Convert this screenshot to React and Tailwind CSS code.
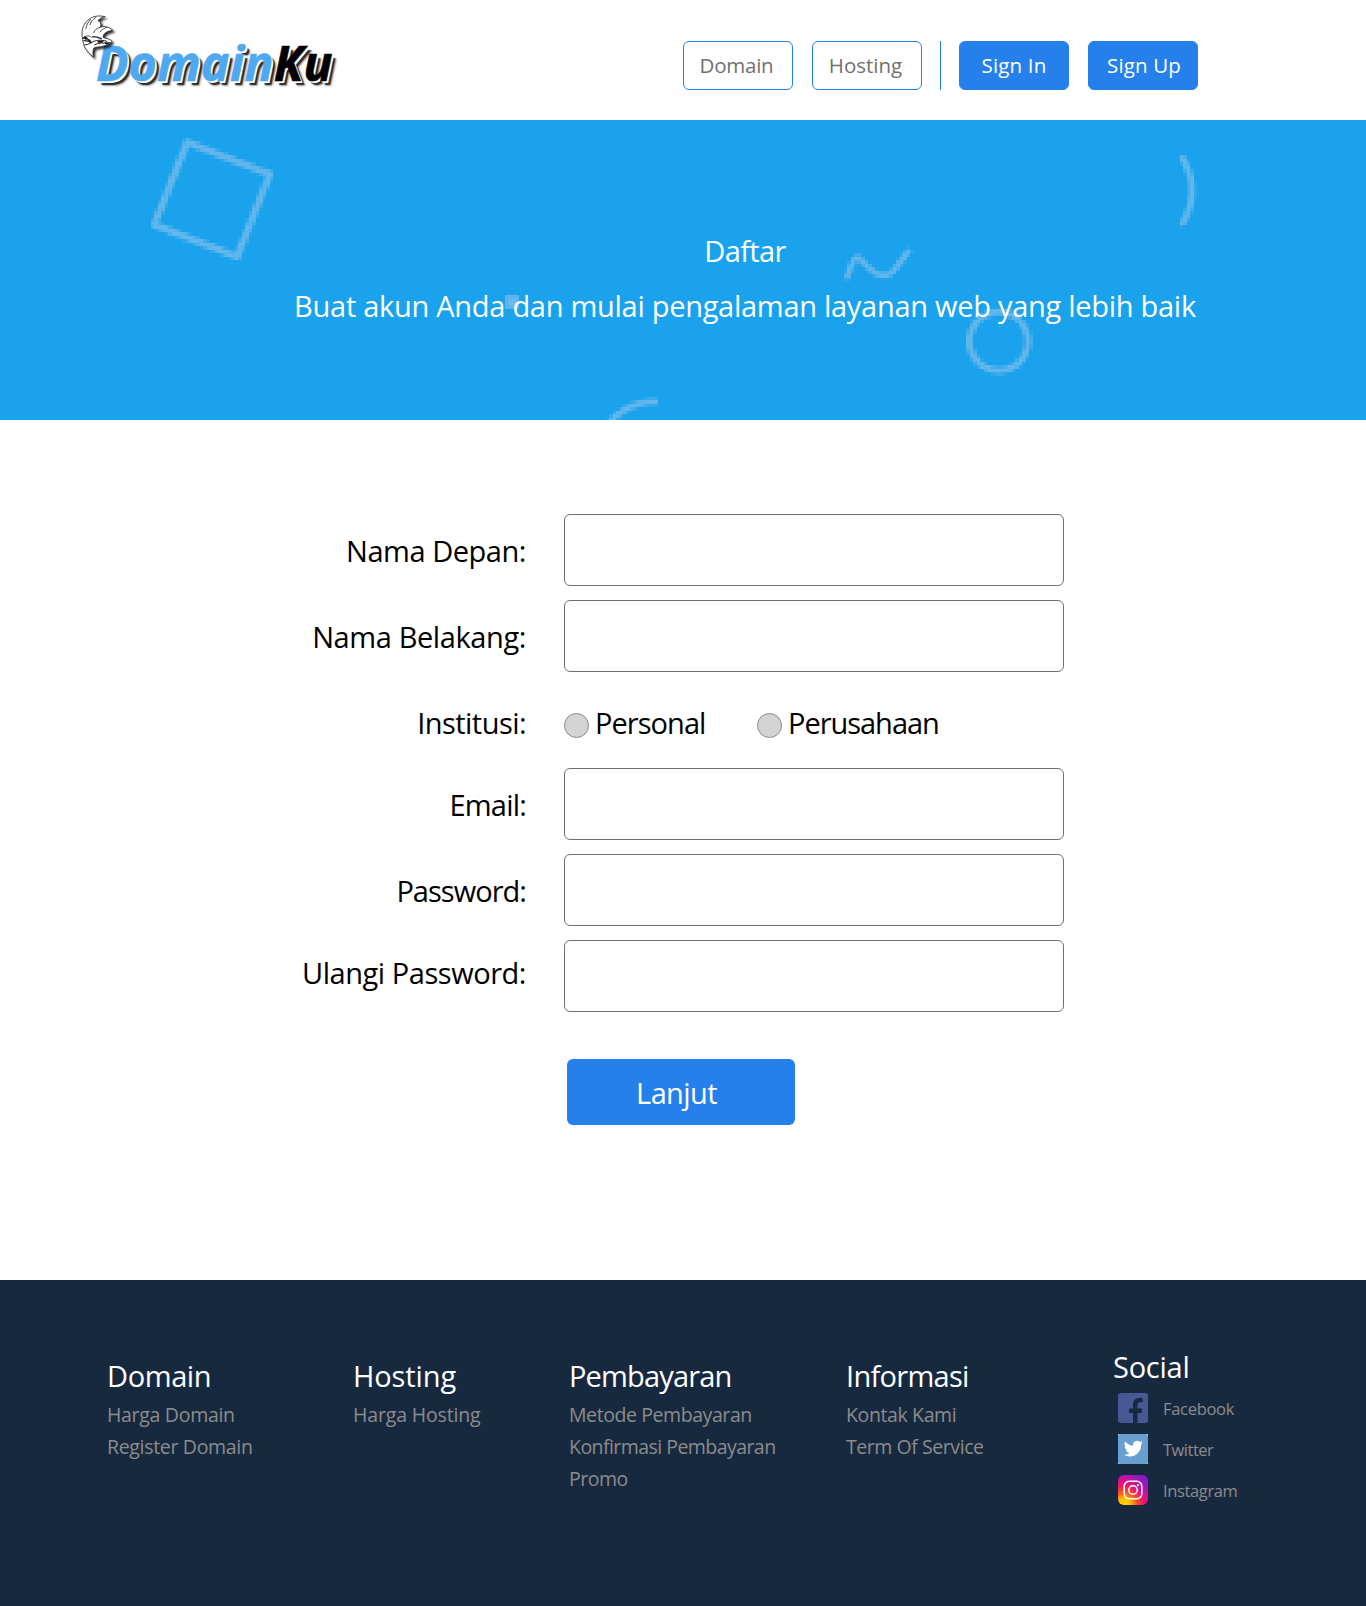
const CELL = 3.5;

// Centre lines of the hero ornaments, in hero pixels.
const arc = (cx, cy, r, from, to, steps = 28) =>
  Array.from({ length: steps + 1 }, (_, i) => {
    const a = ((from + ((to - from) * i) / steps) * Math.PI) / 180;
    return [cx + r * Math.cos(a), cy + r * Math.sin(a)];
  });

const ORNAMENTS = [
  { half: 3.5, points: [[187, 22], [269.5, 54], [236.8, 136.5], [154, 104.5], [187, 22]] },
  { half: 3.3, points: arc(998.5, 221, 29.3, 0, 360, 40) },
  { half: 3.2, points: arc(1130.5, 70.5, 61, -32, 32) },
  { half: 3.2, points: arc(654, 339.5, 58, 222, 271) },
  {
    half: 3,
    points: [
      [847, 156], [850.5, 147], [854, 139], [857.5, 137], [862, 141], [867.5, 146.5],
      [874, 152], [881, 155], [887.5, 154.5], [893.5, 150.5], [901, 140.5], [908, 131.5],
    ],
  },
];

const distance = (px, py, [ax, ay], [bx, by]) => {
  const dx = bx - ax;
  const dy = by - ay;
  const t = Math.max(0, Math.min(1, ((px - ax) * dx + (py - ay) * dy) / (dx * dx + dy * dy)));
  return Math.hypot(px - ax - t * dx, py - ay - t * dy);
};

const rasterise = ({ points, half }) => {
  const xs = points.map((p) => p[0]);
  const ys = points.map((p) => p[1]);
  const cells = [];
  const x0 = Math.floor((Math.min(...xs) - 7) / CELL);
  const x1 = Math.ceil((Math.max(...xs) + 7) / CELL);
  const y0 = Math.floor((Math.min(...ys) - 7) / CELL);
  const y1 = Math.ceil((Math.max(...ys) + 7) / CELL);
  for (let j = y0; j <= y1; j++) {
    for (let i = x0; i <= x1; i++) {
      const cx = (i + 0.5) * CELL;
      const cy = (j + 0.5) * CELL;
      let d = Infinity;
      for (let k = 1; k < points.length; k++) {
        d = Math.min(d, distance(cx, cy, points[k - 1], points[k]));
      }
      const cover = Math.max(0, Math.min(1, (half - d) / CELL + 0.5));
      if (cover > 0.05) cells.push([i * CELL, j * CELL, cover]);
    }
  }
  return cells;
};

const CELLS = ORNAMENTS.flatMap(rasterise);

function HeroOrnaments() {
  return (
    <svg className="absolute inset-0 h-full w-full" viewBox="0 0 1366 300" shapeRendering="crispEdges" aria-hidden="true">
      {CELLS.map(([x, y, cover], i) => (
        <rect key={i} x={x} y={y} width={CELL} height={CELL} fill="#e6dceb" fillOpacity={cover * 0.36} />
      ))}
      <rect x="505" y="175" width="14" height="14" fill="#e6dceb" fillOpacity="0.33" />
      <rect x="508.5" y="178.5" width="7" height="7" fill="#e6dceb" fillOpacity="0.12" />
    </svg>
  );
}

function Griffin() {
  return (
    <svg
      className="absolute -top-[21px] -left-[20px] h-[60px] w-[60px] drop-shadow-[2px_2px_1px_rgba(0,0,0,0.8)]"
      viewBox="0 0 180 180"
      fill="none"
      stroke="#222"
      strokeWidth="2.4"
      strokeLinejoin="round"
      strokeLinecap="round"
      aria-hidden="true"
    >
      <path
        fill="#fff"
        d="M86 20C68 15 50 19 40 27C28 36 19 50 18 66C18 80 20 88 21 95C24 110 30 122 52 141C50 130 50 122 54 114C62 110 72 112 84 108C92 106 100 104 108 94C102 88 94 85 82 83C80 74 88 64 110 61C100 50 86 48 74 51C76 42 74 34 66 32C71 25 78 22 86 20Z"
      />
      <path d="M60 22C50 28 44 36 42 44M44 28C36 36 31 46 30 56M74 51C62 54 56 60 53 68M92 52C82 56 76 60 72 66M21 84C30 76 40 76 46 82" />
      <path strokeWidth="4" d="M22 84C30 84 38 88 44 94M24 92C32 92 40 94 46 98M50 80C60 80 68 82 76 86" />
      <path strokeWidth="3" d="M46 98C58 90 74 88 92 94M56 104C68 98 82 98 96 100M46 98C36 104 30 104 26 104" />
      <path fill="#111" stroke="none" d="M64 92L84 92L78 98L66 98ZM24 78L36 84L28 90ZM84 98L104 96L92 104Z" />
    </svg>
  );
}

function Logo() {
  return (
    <div className="relative ml-24 h-16 text-5xl leading-[64px] font-bold tracking-[0.35px] italic whitespace-nowrap [text-shadow:1px_1px_0_#fff,2px_2px_0_#fff,4px_4px_1px_rgba(0,0,0,0.75),5px_5px_2px_rgba(0,0,0,0.35)]">
      <span className="text-[#4fa9f0] [-webkit-text-stroke:0.7px_#4fa9f0]">Domain</span>
      <span className="text-black [-webkit-text-stroke:0.7px_#000]">Ku</span>
      <Griffin />
    </div>
  );
}

function NavButton({ children, filled, className = "" }) {
  const tone = filled ? "bg-[#2680eb] text-white" : "bg-white text-[#707070]";
  return (
    <button className={`h-[49px] w-[110px] rounded-md border border-[#2680eb] text-[20.5px] leading-none ${tone} ${className}`}>
      {children}
    </button>
  );
}

function Header() {
  return (
    <header className="flex h-[120px] items-start bg-white">
      <div className="w-[683px] pt-[31px]">
        <Logo />
      </div>
      <nav className="flex pt-[41px]">
        <NavButton className="pr-[3px] tracking-[-0.25px]">Domain</NavButton>
        <NavButton className="ml-[19px] pr-[3px]">Hosting</NavButton>
        <div className="ml-[18px] h-[49px] w-px bg-[#2680eb]" />
        <NavButton filled className="ml-[18px] tracking-[0.15px]">Sign In</NavButton>
        <NavButton filled className="ml-[19px] pl-[2px] tracking-[0.12px]">Sign Up</NavButton>
      </nav>
    </header>
  );
}

function Hero() {
  return (
    <section className="relative h-[300px] bg-[#1aa2ed] pt-[103px] pl-[124px] text-center text-[29px] text-white">
      <HeroOrnaments />
      <h1 className="relative leading-[55px] tracking-[-0.61px]">Daftar</h1>
      <p className="relative leading-[55px] tracking-[-0.28px] whitespace-nowrap">
        Buat akun Anda dan mulai pengalaman layanan web yang lebih baik
      </p>
    </section>
  );
}

function Field({ label, type = "text", className = "" }) {
  return (
    <label className="flex h-[72px] items-center">
      <span className={`mr-[38px] w-[526px] text-right whitespace-nowrap ${className}`}>{label}</span>
      <input type={type} className="h-[72px] w-[500px] rounded-md border border-[#707070] bg-white px-4" />
    </label>
  );
}

function Radio({ label, className = "" }) {
  return (
    <label className="flex items-center">
      <input
        type="radio"
        name="institusi"
        className="mt-[6px] h-[25px] w-[25px] appearance-none rounded-full border border-[#8a8a8a] bg-[#d4d4d4]"
      />
      <span className={`ml-[6px] ${className}`}>{label}</span>
    </label>
  );
}

function SignUpForm() {
  return (
    <form className="h-[860px] bg-white pt-[94px] text-[29px] leading-9 text-black">
      <div className="flex flex-col gap-[14px]">
        <Field label="Nama Depan:" className="pt-px tracking-[-0.46px]" />
        <Field label="Nama Belakang:" className="pt-px tracking-[-0.4px]" />
        <div className="flex h-[68px] items-center pt-[5px]">
          <span className="mr-[38px] w-[526px] text-right tracking-[-0.55px]">Institusi:</span>
          <div className="w-[193px]">
            <Radio label="Personal" className="tracking-[-0.95px]" />
          </div>
          <Radio label="Perusahaan" className="tracking-[-1.03px]" />
        </div>
        <Field label="Email:" type="email" className="pt-px tracking-[-0.8px]" />
        <Field label="Password:" type="password" className="pt-px tracking-[-0.97px]" />
        <Field label="Ulangi Password:" type="password" className="pb-[7px] tracking-[-0.46px]" />
      </div>
      <button type="button" className="mt-[47px] ml-[567px] h-[66px] w-[228px] rounded-md bg-[#2680eb] pt-[2px] pr-[9px] tracking-[-0.62px] text-white">
        Lanjut
      </button>
    </form>
  );
}

const COLUMNS = [
  {
    title: "Domain", width: "w-[246px]", tracking: "tracking-[-0.4px]",
    links: [["Harga Domain", "tracking-[-0.3px]"], ["Register Domain", "tracking-[-0.32px]"]],
  },
  {
    title: "Hosting", width: "w-[216px]", tracking: "tracking-[-0.11px]",
    links: [["Harga Hosting", "tracking-[-0.15px]"]],
  },
  {
    title: "Pembayaran", width: "w-[277px]", tracking: "tracking-[-0.84px]",
    links: [
      ["Metode Pembayaran", "tracking-[-0.42px]"],
      ["Konfirmasi Pembayaran", "tracking-[-0.55px]"],
      ["Promo", "tracking-[-0.48px]"],
    ],
  },
  {
    title: "Informasi", width: "w-[266px]", tracking: "tracking-[-0.7px]",
    links: [["Kontak Kami", "tracking-[-0.38px]"], ["Term Of Service", "tracking-[-0.44px]"]],
  },
];

function FacebookIcon() {
  return (
    <svg className="h-[30px] w-[30px]" viewBox="0 0 30 30" aria-hidden="true">
      <rect width="30" height="30" rx="3" fill="#475993" />
      <path
        d="M15 30V20H11V15.5H15V12C15 7.6 17.6 5 21.6 5C22.8 5 23.8 5.1 24.5 5.2V9.3H22C20 9.3 19.5 10.3 19.5 12V15.5H24.2L23.6 20H19.5V30Z"
        fill="#17293f"
      />
    </svg>
  );
}

function TwitterIcon() {
  return (
    <svg className="h-[30px] w-[30px]" viewBox="0 0 30 30" aria-hidden="true">
      <rect width="30" height="30" fill="#fff" />
      <rect width="30" height="30" rx="1.5" fill="#689fd0" />
      <g transform="translate(5.8 5) scale(0.8)">
        <path
          fill="#fff"
          d="M23.95 4.57a10 10 0 0 1-2.82.78 4.96 4.96 0 0 0 2.16-2.73c-.95.56-2 .96-3.13 1.19a4.92 4.92 0 0 0-8.38 4.48C7.69 8.1 4.07 6.13 1.64 3.16a4.93 4.93 0 0 0 1.52 6.57 4.9 4.9 0 0 1-2.23-.61v.06c0 2.39 1.7 4.38 3.95 4.83a4.96 4.96 0 0 1-2.21.08 4.94 4.94 0 0 0 4.6 3.42A9.87 9.87 0 0 1 0 19.54a14 14 0 0 0 7.55 2.21c9.05 0 14-7.5 14-13.98 0-.21 0-.42-.02-.63a9.94 9.94 0 0 0 2.46-2.55z"
        />
      </g>
    </svg>
  );
}

function InstagramIcon() {
  return (
    <svg className="h-[30px] w-[30px]" viewBox="0 0 30 30" fill="none" aria-hidden="true">
      <defs>
        <radialGradient id="ig-warm" cx="0.2" cy="1" r="1">
          <stop offset="0" stopColor="#ffd800" />
          <stop offset="0.2" stopColor="#ffc400" />
          <stop offset="0.42" stopColor="#ff5a1f" />
          <stop offset="0.65" stopColor="#f0136f" />
          <stop offset="1" stopColor="#c010a8" />
        </radialGradient>
        <linearGradient id="ig-cool" x1="0.5" y1="0.5" x2="1" y2="0">
          <stop offset="0" stopColor="#8a1fd0" stopOpacity="0" />
          <stop offset="1" stopColor="#5b20d8" stopOpacity="0.9" />
        </linearGradient>
      </defs>
      <rect width="30" height="30" rx="6" fill="url(#ig-warm)" />
      <rect width="30" height="30" rx="6" fill="url(#ig-cool)" />
      <rect x="6.2" y="6.2" width="17.6" height="17.6" rx="5" stroke="#fff" strokeWidth="1.5" />
      <circle cx="15" cy="15" r="4.3" stroke="#fff" strokeWidth="1.5" />
      <circle cx="19.9" cy="10.1" r="1.1" fill="#fff" />
    </svg>
  );
}

const SOCIAL = [
  { name: "Facebook", Icon: FacebookIcon, tracking: "tracking-[-0.3px]" },
  { name: "Twitter", Icon: TwitterIcon, tracking: "tracking-[-0.5px]" },
  { name: "Instagram", Icon: InstagramIcon, tracking: "tracking-[-0.37px]" },
];

function Footer() {
  return (
    <footer className="flex h-[326px] bg-[#17293f] pt-[67px] pl-[107px]">
      {COLUMNS.map((col) => (
        <div key={col.title} className={`pt-[9px] ${col.width}`}>
          <h2 className={`mb-[3px] text-[29px] leading-10 text-white ${col.tracking}`}>{col.title}</h2>
          <ul className="text-[19.5px] leading-8 whitespace-nowrap text-[#8c8c8c]">
            {col.links.map(([text, tracking]) => (
              <li key={text} className={tracking}>{text}</li>
            ))}
          </ul>
        </div>
      ))}
      <div>
        <h2 className="ml-px text-[29px] leading-10 tracking-[-0.24px] text-white">Social</h2>
        <ul className="mt-[6px] ml-[6px] flex flex-col gap-[11px] text-[16.5px] leading-none text-[#8c8c8c]">
          {SOCIAL.map(({ name, Icon, tracking }) => (
            <li key={name} className="flex h-[30px] items-center gap-[15px]">
              <Icon />
              <span className={`pt-[2px] ${tracking}`}>{name}</span>
            </li>
          ))}
        </ul>
      </div>
    </footer>
  );
}

export default function App() {
  return (
    <div className="w-[1366px] bg-white font-['Open_Sans','Noto_Sans',sans-serif]">
      <Header />
      <Hero />
      <SignUpForm />
      <Footer />
    </div>
  );
}
